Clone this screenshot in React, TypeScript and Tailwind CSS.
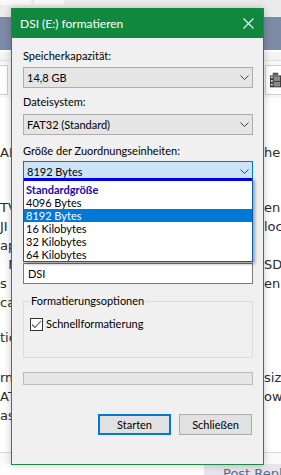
import React from "react";

type PageRow = { gap: string; left: string; right: string };

const pageRows: PageRow[] = [
  { gap: "mt-[45px]", left: "AR", right: "he" },
  { gap: "mt-[36px]", left: "TV", right: "enu" },
  { gap: "mt-0", left: "JI", right: "loc" },
  { gap: "mt-0", left: "ap", right: "" },
  { gap: "mt-0", left: "  N", right: "SD" },
  { gap: "mt-0", left: "s t", right: "en" },
  { gap: "mt-0", left: "ca", right: "" },
  { gap: "mt-[16px]", left: "tic", right: "" },
  { gap: "mt-[21px]", left: "rm", right: "siz" },
  { gap: "mt-0", left: "AT", right: "ows" },
  { gap: "mt-0", left: "as", right: "" },
];

const unitSizes = ["4096 Bytes", "8192 Bytes", "16 Kilobytes", "32 Kilobytes", "64 Kilobytes"];

function Chevron() {
  return (
    <svg width="9" height="5" viewBox="0 0 9 5" className="shrink-0">
      <polyline points="0.5,0.5 4.5,4.5 8.5,0.5" fill="none" stroke="#404040" strokeWidth="1" />
    </svg>
  );
}

function CloseIcon() {
  return (
    <svg width="11" height="11" viewBox="0 0 11 11">
      <path d="M0.5 0.5 L10.5 10.5 M10.5 0.5 L0.5 10.5" stroke="#ffffff" strokeWidth="1.1" />
    </svg>
  );
}

function FilmIcon() {
  return (
    <svg width="12" height="16" viewBox="0 0 12 16">
      <rect x="0" y="3" width="12" height="13" fill="#3a3a3a" />
      <rect x="1" y="4" width="2" height="2" fill="#d8d8d8" />
      <rect x="1" y="8" width="2" height="2" fill="#d8d8d8" />
      <rect x="1" y="12" width="2" height="2" fill="#d8d8d8" />
      <rect x="4" y="4" width="7" height="5" fill="#8a8a8a" />
      <rect x="4" y="10" width="7" height="5" fill="#8a8a8a" />
      <rect x="3" y="0" width="6" height="3" fill="#5a5a5a" />
    </svg>
  );
}

function Select({ value, focused = false }: { value: string; focused?: boolean }) {
  return (
    <div
      className={
        focused
          ? "h-[21px] border border-[#0078d7] bg-[#cce4f7] flex items-center justify-between pl-[3px] pr-[3px]"
          : "h-[21px] border border-[#adadad] bg-[#e5e5e5] flex items-center justify-between pl-[3px] pr-[3px]"
      }
    >
      <span className="leading-[16px]">{value}</span>
      <Chevron />
    </div>
  );
}

function UnitList() {
  return (
    <div className="absolute left-0 right-0 top-[17px] z-10 bg-white border-x border-b border-[#0a5fb4] shadow-[2px_2px_3px_rgba(0,0,0,0.35)]">
      <div className="h-[3px] bg-[#0000f0]" />
      <div className="pt-[2px]">
        <div className="h-[13px] leading-[13px] pl-[2px] font-bold text-[#1a0aa8]">Standardgröße</div>
        {unitSizes.map((s) => (
          <div
            key={s}
            className={
              s === "8192 Bytes"
                ? "h-[13px] leading-[13px] pl-[2px] bg-[#0078d7] text-white"
                : "h-[13px] leading-[13px] pl-[2px]"
            }
          >
            {s}
          </div>
        ))}
      </div>
    </div>
  );
}

function FormatDialog() {
  return (
    <div className="absolute left-[11px] top-[8px] w-[253px] h-[457px] border border-[#1b8a45] bg-[#f0f0f0] shadow-[0_0_8px_rgba(0,0,0,0.22)] flex flex-col font-['Lato',sans-serif] text-[11px] text-black">
      <div className="h-[29px] shrink-0 bg-[#10893e] flex items-center justify-between pl-[8px] pr-[9px] text-white">
        <span className="text-[12px] leading-[16px]">DSI (E:) formatieren</span>
        <CloseIcon />
      </div>

      <div className="flex flex-col pl-[11px] pr-[10px] pt-[10px]">
        <div className="leading-[16px]">Speicherkapazität:</div>
        <div className="mt-[3px]">
          <Select value="14,8 GB" />
        </div>

        <div className="mt-[6px] leading-[16px]">Dateisystem:</div>
        <div className="mt-[4px]">
          <Select value="FAT32 (Standard)" />
        </div>

        <div className="mt-[8px] leading-[16px]">Größe der Zuordnungseinheiten:</div>
        <div className="relative mt-[2px]">
          <Select value="8192 Bytes" focused />
          <UnitList />
        </div>

        {/* covered by the open list */}
        <div className="invisible mt-[9px] h-[23px] w-[190px] border border-[#adadad] bg-[#e1e1e1] flex items-center justify-center">
          Gerätestandards wiederherstellen
        </div>
        <div className="invisible mt-[30px] leading-[16px]">Volumebezeichnung:</div>
        <div className="mt-[3px] h-[21px] border border-[#7a7a7a] bg-white flex items-center pl-[4px]">
          <span className="leading-[16px]">DSI</span>
        </div>

        <fieldset className="mt-[9px] h-[65px] border border-[#dcdcdc] pl-[6px]">
          <legend className="px-[1px] leading-[16px]">Formatierungsoptionen</legend>
          <label className="mt-[7px] flex items-center gap-[3px]">
            <span className="w-[13px] h-[13px] border border-[#333333] bg-white flex items-center justify-center">
              <svg width="11" height="11" viewBox="0 0 11 11">
                <polyline points="1,5.5 4,8.5 10,2" fill="none" stroke="#555555" strokeWidth="1.1" />
              </svg>
            </span>
            <span className="leading-[16px]">Schnellformatierung</span>
          </label>
        </fieldset>

        <div className="mt-[14px] h-[13px] border border-[#bcbcbc] bg-[#e6e6e6]" />

        <div className="mt-[29px] flex justify-end gap-[8px] pr-[1px]">
          <button className="w-[73px] h-[21px] border-2 border-[#0078d7] bg-[#e1e1e1] leading-[16px]">Starten</button>
          <button className="w-[73px] h-[21px] border border-[#adadad] bg-[#e1e1e1] leading-[16px]">Schließen</button>
        </div>
      </div>
    </div>
  );
}

export default function App() {
  return (
    <div className="relative w-[281px] h-[475px] overflow-hidden bg-white font-['DejaVu_Sans',sans-serif] text-[13px] text-[#2b2b2b]">
      {/* page behind the dialog */}
      <div className="h-[17px] bg-[#ececec] flex gap-[3px] items-start">
        <div className="w-[31px] h-[5px] bg-[#f8f8f8]" />
        <div className="w-[30px] h-[5px] bg-[#f8f8f8]" />
      </div>
      <div className="h-[33px] bg-[#7d8ba7]" />
      <div className="h-[2px] bg-white" />
      <div className="h-[9px] bg-[#f4f4f4] border-b border-[#dedede]" />
      <div className="h-[37px] bg-[#f7f7f7] flex items-center justify-between">
        <div className="w-[8px] h-[30px] bg-white border border-l-0 border-[#cfcfcf]" />
        <div className="w-[16px] h-[30px] bg-white border border-r-0 border-[#cfcfcf] flex items-center pl-[4px]">
          <FilmIcon />
        </div>
      </div>

      <div className="flex flex-col">
        {pageRows.map((r, i) => (
          <div key={i} className={`${r.gap} h-[19px] leading-[19px] flex whitespace-pre`}>
            <span className="w-[264px] shrink-0 overflow-hidden">{r.left}</span>
            <span className="overflow-hidden">{r.right}</span>
          </div>
        ))}
      </div>

      <div className="mt-[27px] border-t border-[#d8d8d8] h-[12px] bg-[#fafafa]" />
      <div className="flex justify-end">
        <div className="w-[77px] h-[20px] bg-[#e4e6ec] text-[#5a6a8c] pl-[19px] leading-[20px] whitespace-nowrap overflow-hidden">
          Post Reply
        </div>
      </div>

      <FormatDialog />
    </div>
  );
}
